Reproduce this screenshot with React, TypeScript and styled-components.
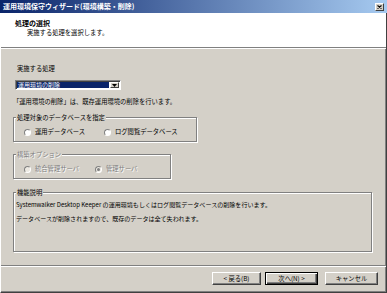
import React from "react";
import styled, { createGlobalStyle } from "styled-components";

const FONT = `"Noto Sans CJK JP", "Noto Sans", sans-serif`;

const Global = createGlobalStyle`
  html, body { margin: 0; padding: 0; background: #d4d0c8; }
  body { font-family: ${FONT}; }
  *, *::before, *::after { box-sizing: border-box; }
`;

const Window = styled.div`
  width: 387px;
  height: 293px;
  display: flex;
  flex-direction: column;
  background: #d4d0c8;
  font-family: ${FONT};
  font-size: 6.3px;
  color: #000;
  overflow: hidden;
`;

const TitleBar = styled.div`
  height: 13px;
  flex: none;
  display: flex;
  align-items: center;
  justify-content: space-between;
  padding: 0 3px 0 3px;
  background: linear-gradient(to right, #0a246a 0%, #a6caf0 100%);
`;

const TitleText = styled.span`
  color: #fff;
  font-weight: bold;
  font-size: 7px;
  line-height: 13px;
  white-space: nowrap;
`;

const CloseButton = styled.span`
  width: 9px;
  height: 8px;
  display: flex;
  align-items: center;
  justify-content: center;
  background: #d4d0c8;
  border: 1px solid;
  border-color: #fff #404040 #404040 #fff;
`;

const Frame = styled.div`
  flex: 1;
  display: flex;
  flex-direction: column;
  border-left: 1px solid #fff;
  border-right: 1px solid #404040;
  border-bottom: 1px solid #404040;
  box-shadow: inset 0 -1px 0 #808080, inset -1px 0 0 #808080;
`;

const Header = styled.div`
  height: 35px;
  flex: none;
  background: #fff;
  border-bottom: 1px solid #808080;
  padding: 5px 0 0 14px;
`;

const HeaderTitle = styled.div`
  font-weight: bold;
  font-size: 7px;
  line-height: 10px;
  height: 10px;
`;

const HeaderSub = styled.div`
  margin-left: 12px;
  line-height: 9px;
  height: 9px;
`;

const Body = styled.div`
  flex: 1;
  min-height: 0;
  display: flex;
  flex-direction: column;
  align-items: flex-start;
  border-top: 1px solid #fff;
  padding: 0 14px 13px 12px;
`;

const TextLine = styled.div<{ $mt?: number; $ml?: number }>`
  margin-top: ${(p) => p.$mt ?? 0}px;
  margin-left: ${(p) => p.$ml ?? 0}px;
  height: 10px;
  line-height: 10px;
  white-space: nowrap;
`;

const Combo = styled.div`
  margin: 6px 0 0 2px;
  width: 106px;
  height: 10px;
  display: flex;
  padding: 1px;
  background: #fff;
  border: 1px solid;
  border-color: #808080 #fff #fff #808080;
  box-shadow: inset 1px 1px 0 #404040;
`;

const ComboValue = styled.div`
  flex: 1;
  margin: 0 1px 0 0;
  display: flex;
  align-items: center;
  background: #0a246a;
  color: #fff;
  font-size: 6px;
  line-height: 6px;
  padding-left: 1px;
  white-space: nowrap;
`;

const ComboArrow = styled.div`
  width: 9px;
  display: flex;
  align-items: center;
  justify-content: center;
  background: #d4d0c8;
  border: 1px solid;
  border-color: #fff #404040 #404040 #fff;
`;

const Group = styled.fieldset<{ $mt: number; $w?: number; $grow?: boolean }>`
  margin: ${(p) => p.$mt}px 0 0 0;
  padding: 2px 4px 4px 2px;
  width: ${(p) => (p.$w ? `${p.$w}px` : "100%")};
  min-width: 0;
  ${(p) => (p.$grow ? "flex: 1;" : "")}
  border: 1px solid #808080;
  box-shadow: inset 1px 1px 0 #fff, 1px 1px 0 #fff;
`;

const Legend = styled.legend<{ $disabled?: boolean }>`
  padding: 0 1px;
  height: 11px;
  line-height: 11px;
  background: #d4d0c8;
  color: ${(p) => (p.$disabled ? "#808080" : "#000")};
  text-shadow: ${(p) => (p.$disabled ? "1px 1px 0 #fff" : "none")};
  white-space: nowrap;
`;

const RadioRow = styled.div`
  display: flex;
  padding: 2px 0 0 8px;
`;

const RadioItem = styled.label<{ $disabled?: boolean }>`
  display: flex;
  align-items: center;
  gap: 4px;
  width: 80px;
  height: 10px;
  line-height: 10px;
  white-space: nowrap;
  color: ${(p) => (p.$disabled ? "#808080" : "#000")};
  text-shadow: ${(p) => (p.$disabled ? "1px 1px 0 #fff" : "none")};
`;

const RadioCircle = styled.span<{ $checked?: boolean; $disabled?: boolean }>`
  flex: none;
  width: 7px;
  height: 7px;
  border-radius: 50%;
  border: 1px solid;
  border-color: #808080 #fff #fff #808080;
  background: ${(p) => (p.$disabled ? "#ece9e2" : "#fff")};
  display: flex;
  align-items: center;
  justify-content: center;
  &::after {
    content: "";
    display: ${(p) => (p.$checked ? "block" : "none")};
    width: 3px;
    height: 3px;
    border-radius: 50%;
    background: ${(p) => (p.$disabled ? "#808080" : "#000")};
  }
`;

const DescText = styled.div<{ $mt?: number }>`
  margin-top: ${(p) => p.$mt ?? 0}px;
  height: 10px;
  line-height: 10px;
  font-size: 6.05px;
  white-space: nowrap;
`;

const Footer = styled.div`
  flex: none;
  display: flex;
  justify-content: flex-end;
  border-top: 1px solid #808080;
  box-shadow: inset 0 1px 0 #fff;
  padding: 6px 8px 7px 0;
`;

const Button = styled.button<{ $default?: boolean; $w: number; $ml?: number }>`
  width: ${(p) => p.$w}px;
  height: 13px;
  margin: 0 0 0 ${(p) => p.$ml ?? 0}px;
  padding: 0;
  font-family: ${FONT};
  font-size: 6.3px;
  line-height: 10px;
  color: #000;
  background: #d4d0c8;
  border: 1px solid;
  border-color: ${(p) => (p.$default ? "#000" : "#fff #404040 #404040 #fff")};
  box-shadow: ${(p) =>
    p.$default
      ? "inset 1px 1px 0 #fff, inset -1px -1px 0 #404040, inset -2px -2px 0 #808080"
      : "inset -1px -1px 0 #808080"};
  white-space: nowrap;
`;

export default function App() {
  return (
    <>
      <Global />
      <Window>
        <TitleBar>
          <TitleText>運用環境保守ウィザード(環境構築・削除)</TitleText>
          <CloseButton>
            <svg width="5" height="4" viewBox="0 0 5 4">
              <path d="M0.5 0.5 L4.5 3.5 M4.5 0.5 L0.5 3.5" stroke="#000" strokeWidth="1.1" />
            </svg>
          </CloseButton>
        </TitleBar>
        <Frame>
          <Header>
            <HeaderTitle>処理の選択</HeaderTitle>
            <HeaderSub>実施する処理を選択します。</HeaderSub>
          </Header>
          <Body>
            <TextLine $mt={15} $ml={4}>実施する処理</TextLine>
            <Combo>
              <ComboValue>運用環境の削除</ComboValue>
              <ComboArrow>
                <svg width="5" height="3" viewBox="0 0 5 3">
                  <path d="M0 0 H5 L2.5 3 Z" fill="#000" />
                </svg>
              </ComboArrow>
            </Combo>
            <TextLine $mt={7}>「運用環境の削除」は、既存運用環境の削除を行います。</TextLine>
            <Group $mt={5} $w={184}>
              <Legend>処理対象のデータベースを指定</Legend>
              <RadioRow>
                <RadioItem>
                  <RadioCircle />
                  運用データベース
                </RadioItem>
                <RadioItem>
                  <RadioCircle />
                  ログ閲覧データベース
                </RadioItem>
              </RadioRow>
            </Group>
            <Group $mt={7} $w={158}>
              <Legend $disabled>構築オプション</Legend>
              <RadioRow>
                <RadioItem $disabled>
                  <RadioCircle $disabled />
                  統合管理サーバ
                </RadioItem>
                <RadioItem $disabled>
                  <RadioCircle $disabled $checked />
                  管理サーバ
                </RadioItem>
              </RadioRow>
            </Group>
            <Group $mt={8} $grow>
              <Legend>機能説明</Legend>
              <DescText>
                Systemwalker Desktop Keeper の運用環境もしくはログ閲覧データベースの削除を行います。
              </DescText>
              <DescText $mt={4}>データベースが削除されますので、既存のデータは全て失われます。</DescText>
            </Group>
          </Body>
          <Footer>
            <Button $w={49}>&lt; 戻る(B)</Button>
            <Button $w={53} $ml={4} $default>
              次へ(N) &gt;
            </Button>
            <Button $w={53} $ml={7}>キャンセル</Button>
          </Footer>
        </Frame>
      </Window>
    </>
  );
}
